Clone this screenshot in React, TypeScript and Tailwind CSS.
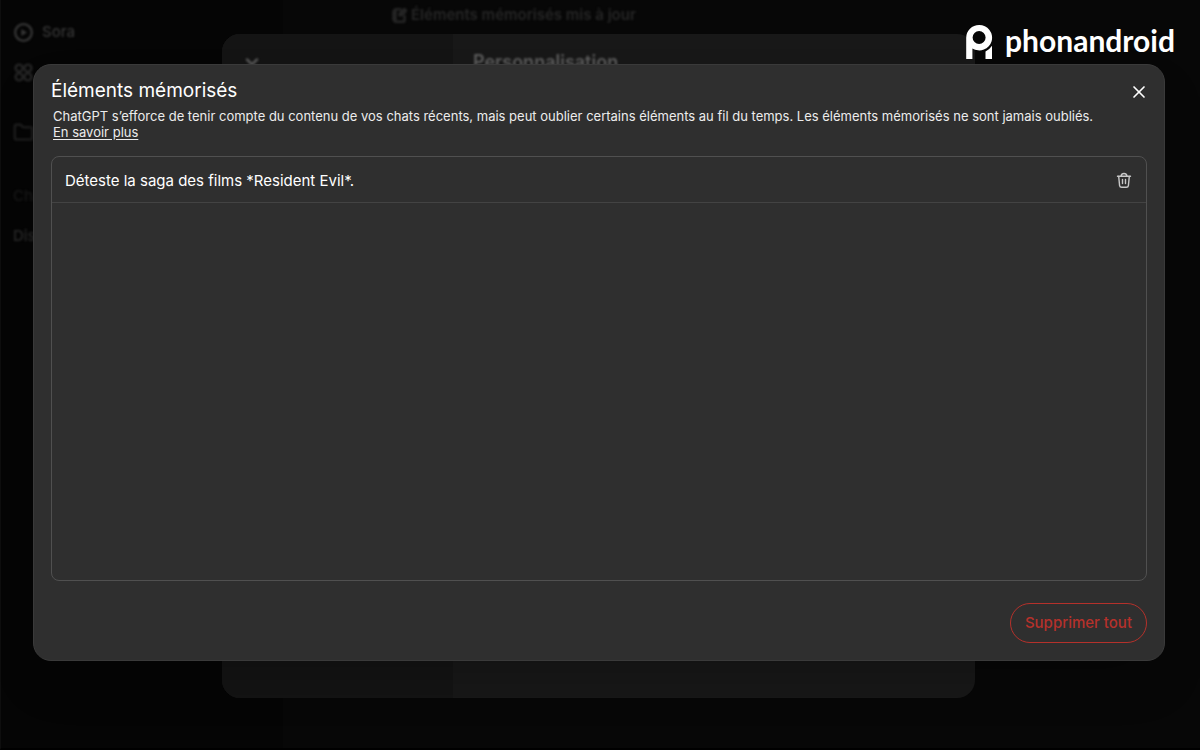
import { ChevronDown, Folder, NotebookPen, X } from 'lucide-react'

const memories = [{ id: 1, text: 'Déteste la saga des films *Resident Evil*.' }]

export default function App() {
  return (
    <div className="relative min-h-screen overflow-hidden bg-[#070707] font-['Inter',sans-serif] text-white">
      <Backdrop />
      <div className="relative flex min-h-screen flex-col pt-16 pr-[35px] pb-[89px] pl-[33px]">
        <MemoryDialog />
      </div>
      <Brand />
    </div>
  )
}

/* Dimmed app behind the dialog: sidebar, toast and the settings window */
function Backdrop() {
  return (
    <div aria-hidden="true" className="absolute inset-0 flex border-b-2 border-l border-b-black border-l-[#0e0e0e]">
      <aside className="flex w-[282px] shrink-0 flex-col bg-[#050505] px-3 pt-5 text-[15px] leading-6 font-medium">
        <div className="flex h-6 items-center gap-2 text-[#363636] blur-[1px]">
          <PlayIcon />
          <span>Sora</span>
        </div>
        <div className="mt-4 flex h-6 items-center text-[#262626] blur-[1px]">
          <CloverIcon />
        </div>
        <div className="mt-9 flex h-6 items-center text-[#202020] blur-[1px]">
          <Folder size={21} strokeWidth={2.5} />
        </div>
        <span className="mt-10 text-[#181818] blur-[1px]">Chats</span>
        <span className="mt-4 text-[#2a2a2a] blur-[1px]">Discussion</span>
      </aside>

      <div className="flex-1">
        <p className="ml-[109px] flex h-[30px] items-center gap-1 text-[15px] font-semibold text-[#262626] blur-[1px]">
          <NotebookPen size={15} strokeWidth={4} />
          Éléments mémorisés mis à jour
        </p>
      </div>

      <div className="absolute top-[34px] right-[225px] bottom-[50px] left-[221px] flex overflow-hidden rounded-[18px] bg-[#181818]">
        <div className="w-[231px] bg-[#141414] px-5 pt-[18px]">
          <ChevronDown size={20} strokeWidth={3} className="text-[#555555] blur-[1px]" />
        </div>
        <div className="flex-1 px-5 pt-4">
          <h2 className="text-lg leading-6 font-semibold text-[#5c5c5c] blur-[1px]">Personnalisation</h2>
        </div>
      </div>
    </div>
  )
}

function MemoryDialog() {
  return (
    <section
      role="dialog"
      aria-labelledby="memory-title"
      className="flex flex-1 flex-col rounded-[18px] border border-[#3a3a3a] bg-[#2f2f2f] px-[17px] pt-3 pb-[17px] shadow-2xl"
    >
      <header className="flex items-start justify-between">
        <h1 id="memory-title" className="text-[19px] leading-7">
          Éléments mémorisés
        </h1>
        <button type="button" aria-label="Fermer" className="mt-[5px] mr-[-2px]">
          <X size={20} strokeWidth={2} />
        </button>
      </header>
      <div className="mt-[3px] px-0.5 text-[13px] leading-4 text-[#ececec]">
        <p>
          ChatGPT s’efforce de tenir compte du contenu de vos chats récents, mais peut oublier certains éléments au fil
          du temps. Les éléments mémorisés ne sont jamais oubliés.
        </p>
        <a href="#" className="underline underline-offset-2">
          En savoir plus
        </a>
      </div>

      <ul className="mt-4 flex-1 rounded-lg border border-[#505050]">
        {memories.map((memory) => (
          <li
            key={memory.id}
            className="flex items-center justify-between border-b border-[#434343] pt-3 pr-3 pb-[9px] pl-[13px] text-[15px] leading-6"
          >
            <span>{memory.text}</span>
            <button type="button" aria-label="Supprimer" className="text-[#c8c8c8]">
              <TrashIcon />
            </button>
          </li>
        ))}
      </ul>

      <footer className="mt-[22px] flex justify-end">
        <button
          type="button"
          className="h-10 rounded-full border border-[#b5312b] px-[14px] pt-px text-[15px] font-medium text-[#b5312b]"
        >
          Supprimer tout
        </button>
      </footer>
    </section>
  )
}

function Brand() {
  return (
    <div className="absolute top-5 right-[25px] flex items-start gap-3">
      <svg width="27" height="34" viewBox="0 0 27 34" fill="currentColor" className="mt-[5px]" aria-hidden="true">
        <path
          fillRule="evenodd"
          d="M13.100 0a12.900 12.700 0 1 1-6.700 23.500V34H.2V12.700A12.900 12.700 0 0 1 13.100 0Zm0 6a6.500 6.500 0 1 0 0 13 6.500 6.500 0 0 0 0-13Z"
        />
        <path d="M26 20.800V34h-6.500v-7.600a14.500 14.500 0 0 0 6.500-5.600Z" />
      </svg>
      <span className="font-['Lato',sans-serif] text-[30px] leading-10 font-bold">phonandroid</span>
    </div>
  )
}

function PlayIcon() {
  return (
    <svg width="21" height="21" viewBox="0 0 24 24" fill="none" aria-hidden="true">
      <circle cx="12" cy="12" r="9.500" stroke="currentColor" strokeWidth="2.600" />
      <path d="M9.500 8v8l6.500-4Z" fill="currentColor" />
    </svg>
  )
}

function CloverIcon() {
  return (
    <svg width="21" height="21" viewBox="0 0 24 24" fill="none" stroke="currentColor" strokeWidth="2.800">
      <circle cx="7" cy="7" r="4" />
      <circle cx="17" cy="7" r="4" />
      <circle cx="7" cy="17" r="4" />
      <circle cx="17" cy="17" r="4" />
    </svg>
  )
}

function TrashIcon() {
  return (
    <svg
      width="20"
      height="20"
      viewBox="0 0 20 20"
      fill="none"
      stroke="currentColor"
      strokeWidth="1.400"
      strokeLinecap="round"
      strokeLinejoin="round"
      aria-hidden="true"
    >
      <path d="M3.500 5.200h13M7 5c.3-1.600 1.400-2.500 3-2.500s2.700.9 3 2.500" />
      <path d="m4.700 5.400.9 9.200a2 2 0 0 0 2 1.700h4.800a2 2 0 0 0 2-1.700l.9-9.200M8.500 8.500v4M11.500 8.500v4" />
    </svg>
  )
}
